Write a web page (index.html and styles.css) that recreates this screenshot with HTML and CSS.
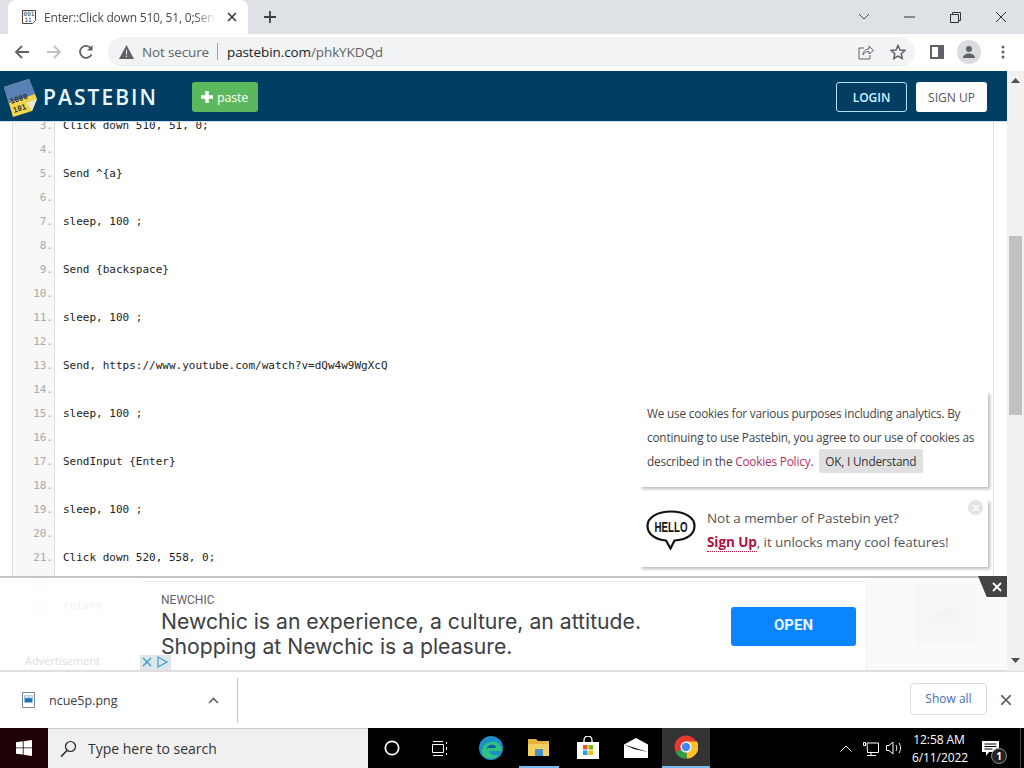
FILE: index.html
```html
<!DOCTYPE html>
<html lang="en">
<head>
<meta charset="utf-8">
<title>Enter::Click down 510, 51, 0;Send</title>
<link rel="stylesheet" href="styles.css">
</head>
<body>
<div class="tabbar">
  <div class="tab">
    <svg class="favicon" width="16" height="16" viewBox="0 0 16 16"><path d="M1.500 1.500h13v10l-3 3h-10z" fill="#fff" stroke="#444"/><text x="8" y="7" class="favtext">001</text><text x="7" y="13" class="favtext">11</text></svg>
    <span class="tab-title">Enter::Click down 510, 51, 0;Send</span>
    <svg class="tab-x" width="10" height="10" viewBox="0 0 10 10"><path d="M1 1l8 8M9 1l-8 8" stroke="#3c4043" stroke-width="1.700"/></svg>
  </div>
  <svg class="new-tab" width="14" height="14" viewBox="0 0 14 14"><path d="M7 1v12M1 7h12" stroke="#3c4043" stroke-width="1.800"/></svg>
  <div class="win-controls">
    <svg width="12" height="8" viewBox="0 0 12 8"><path d="M1 1l5 5 5-5" fill="none" stroke="#444" stroke-width="1"/></svg>
    <svg class="win-min" width="11" height="2" viewBox="0 0 11 2"><path d="M0 1h11" stroke="#333"/></svg>
    <svg class="win-max" width="11" height="11" viewBox="0 0 11 11"><path d="M.5 2.500h8v8h-8zM2.500 2.500v-2h8v8h-2" fill="none" stroke="#333"/></svg>
    <svg class="win-close" width="12" height="12" viewBox="0 0 12 12"><path d="M1 1l10 10M11 1L1 11" stroke="#333"/></svg>
  </div>
</div>
<div class="toolbar">
  <svg class="nav" width="16" height="16" viewBox="0 0 16 16"><path d="M15 8H2M8 2L2 8l6 6" fill="none" stroke="#5f6368" stroke-width="1.800"/></svg>
  <svg class="nav" width="16" height="16" viewBox="0 0 16 16"><path d="M1 8h13M8 2l6 6-6 6" fill="none" stroke="#bdc1c6" stroke-width="1.800"/></svg>
  <svg class="nav" width="16" height="16" viewBox="0 0 16 16"><path d="M13.500 10.500A6 6 0 1 1 13 4.500" fill="none" stroke="#5f6368" stroke-width="1.800"/><path d="M14.500 1v5.500H9z" fill="#5f6368"/></svg>
  <div class="omnibox">
    <svg width="15" height="14" viewBox="0 0 15 14"><path d="M7.500 0L15 14H0z" fill="#5f6368"/><path d="M7 5h1v4.500H7zM7 10.500h1v1.500H7z" fill="#f1f3f4"/></svg>
    <span class="not-secure">Not secure</span>
    <span class="omni-sep"></span>
    <span class="url">pastebin.com<span class="url-path">/phkYKDQd</span></span>
    <svg class="omni-share" width="16" height="16" viewBox="0 0 16 16"><path d="M6 4H1v11h11v-4M5 11c0-4 3-6 6-6V2l4.500 4.500L11 10V7.500c-3 0-5 1-6 3.500z" fill="none" stroke="#5f6368"/></svg>
    <svg width="16" height="16" viewBox="0 0 16 16"><path d="M8 1.500l2 4.500 4.800.5-3.600 3.200 1 4.800L8 12l-4.200 2.500 1-4.800L1.200 6.500 6 6z" fill="none" stroke="#5f6368" stroke-width="1.500"/></svg>
  </div>
  <svg class="tool-side" width="14" height="14" viewBox="0 0 14 14"><path d="M0 0h14v14H0z" fill="#5f6368"/><path d="M2 2h6v10H2z" fill="#fff"/></svg>
  <div class="avatar"><svg width="14" height="14" viewBox="0 0 14 14"><circle cx="7" cy="4" r="3" fill="#5f6368"/><path d="M1 13c0-3 3-4.500 6-4.500s6 1.500 6 4.500z" fill="#5f6368"/></svg></div>
  <svg class="tool-menu" width="4" height="14" viewBox="0 0 4 14"><circle cx="2" cy="2" r="1.500" fill="#5f6368"/><circle cx="2" cy="7" r="1.500" fill="#5f6368"/><circle cx="2" cy="12" r="1.500" fill="#5f6368"/></svg>
</div>
<div class="viewport">
  <div class="page">
    <header class="site-header">
      <svg class="logo" width="36" height="42" viewBox="0 0 36 42">
        <path d="M2 10L27 2l8 20-5 12-19 6z" fill="#f3d64e"/>
        <path d="M2 10L27 2l6 15-26 9z" fill="#5a80b8"/>
        <path d="M30 34l5-12-10 4z" fill="#e8e8d8"/>
        <text x="9" y="27" class="logo-text" transform="rotate(-18 9 27)">1000</text>
        <text x="12" y="36" class="logo-text" transform="rotate(-18 12 36)">101</text>
      </svg>
      <span class="brand">PASTEBIN</span>
      <a class="paste-btn"><svg width="14" height="14" viewBox="0 0 14 14"><path d="M7 1v12M1 7h12" stroke="#fff" stroke-width="3.500"/></svg>paste</a>
      <a class="btn btn-login">LOGIN</a>
      <a class="btn btn-signup">SIGN UP</a>
    </header>
    <div class="code">
      <div class="row"><i>3.</i><code>Click down 510, 51, 0;</code></div>
      <div class="row"><i>4.</i><code></code></div>
      <div class="row"><i>5.</i><code>Send ^{a}</code></div>
      <div class="row"><i>6.</i><code></code></div>
      <div class="row"><i>7.</i><code>sleep, 100 ;</code></div>
      <div class="row"><i>8.</i><code></code></div>
      <div class="row"><i>9.</i><code>Send {backspace}</code></div>
      <div class="row"><i>10.</i><code></code></div>
      <div class="row"><i>11.</i><code>sleep, 100 ;</code></div>
      <div class="row"><i>12.</i><code></code></div>
      <div class="row"><i>13.</i><code>Send, https://www.youtube.com/watch?v=dQw4w9WgXcQ</code></div>
      <div class="row"><i>14.</i><code></code></div>
      <div class="row"><i>15.</i><code>sleep, 100 ;</code></div>
      <div class="row"><i>16.</i><code></code></div>
      <div class="row"><i>17.</i><code>SendInput {Enter}</code></div>
      <div class="row"><i>18.</i><code></code></div>
      <div class="row"><i>19.</i><code>sleep, 100 ;</code></div>
      <div class="row"><i>20.</i><code></code></div>
      <div class="row"><i>21.</i><code>Click down 520, 558, 0;</code></div>
      <div class="row"><i>22.</i><code></code></div>
      <div class="row"><i>23.</i><code>return</code></div>
    </div>
    <div class="cookie-box">We use cookies for various purposes including analytics. By continuing to use Pastebin, you agree to our use of cookies as described in the <a class="cookie-link">Cookies Policy</a>. <span class="cookie-ok">OK, I Understand</span></div>
    <div class="hello-box">
      <svg class="hello-icon" width="50" height="40" viewBox="0 0 50 40"><path d="M25 1.500C12 1.500 1.500 7 1.500 16S11 30 20 30.500l4.500 8 4-8C40 30 48.500 25 48.500 16S38 1.500 25 1.500z" fill="#fff" stroke="#111" stroke-width="2.200"/><text x="25" y="22" class="hello-text" textLength="33" lengthAdjust="spacingAndGlyphs">HELLO</text></svg>
      <div class="hello-copy">
        <div>Not a member of Pastebin yet?</div>
        <div><a class="signup-link">Sign Up</a>, it unlocks many cool features!</div>
      </div>
      <span class="hello-close"><svg width="8" height="8" viewBox="0 0 8 8"><path d="M1 1l6 6M7 1L1 7" stroke="#fff" stroke-width="1.500"/></svg></span>
    </div>
    <div class="ad-dock">
      <div class="ad-side">
        <span class="ad-label">Advertisement</span>
        <span class="ad-choices"><svg width="14" height="14" viewBox="0 0 14 14"><path d="M3 3l8 8M11 3l-8 8" stroke="#3aa0c8" stroke-width="1.500"/></svg><svg width="14" height="14" viewBox="0 0 14 14"><path d="M3 2l9 5-9 5z" fill="none" stroke="#3aa0c8" stroke-width="1.200"/></svg></span>
      </div>
      <div class="ad">
        <div class="ad-copy">
          <div class="ad-brand">NEWCHIC</div>
          <div class="ad-head">Newchic is an experience, a culture, an attitude.<br>Shopping at Newchic is a pleasure.</div>
        </div>
        <a class="ad-open">OPEN</a>
      </div>
      <div class="ad-right"><span class="to-top"><svg width="30" height="18" viewBox="0 0 30 18"><path d="M4 15L15 5l11 10" fill="none" stroke="#f3f3f3" stroke-width="5"/></svg></span></div>
      <span class="ad-close"><svg width="10" height="10" viewBox="0 0 10 10"><path d="M1 1l8 8M9 1L1 9" stroke="#fff" stroke-width="1.800"/></svg></span>
    </div>
  </div>
  <div class="scrollbar">
    <svg width="9" height="5" viewBox="0 0 9 5"><path d="M4.500 0L9 5H0z" fill="#505050"/></svg>
    <div class="thumb"></div>
    <svg width="9" height="5" viewBox="0 0 9 5"><path d="M0 0h9L4.500 5z" fill="#505050"/></svg>
  </div>
</div>
<div class="downloads">
  <svg class="file-icon" width="13" height="16" viewBox="0 0 13 16"><path d="M.5.500h12v15H.5z" fill="#fff" stroke="#789"/><path d="M2.500 3.500h8v7h-8z" fill="#1b75bb"/><path d="M2.500 3.500h8v2l-2 1-2-1-2 1-2-1z" fill="#cfe6f5"/></svg>
  <span class="file-name">ncue5p.png</span>
  <svg class="file-caret" width="11" height="7" viewBox="0 0 11 7"><path d="M1 6l4.500-4.500L10 6" fill="none" stroke="#5f6368" stroke-width="1.600"/></svg>
  <span class="dl-sep"></span>
  <a class="show-all">Show all</a>
  <svg class="dl-close" width="10" height="10" viewBox="0 0 10 10"><path d="M0 0l10 10M10 0L0 10" stroke="#5f6368" stroke-width="1.700"/></svg>
</div>
<div class="taskbar">
  <div class="start"><svg width="16" height="16" viewBox="0 0 16 16"><path d="M0 2.300l6.800-1v6.200H0zM7.600 1.200L16 0v7.500H7.600zM0 8.300h6.800v6.300L0 13.700zM7.600 8.300H16V16l-8.400-1.200z" fill="#fff"/></svg></div>
  <div class="search"><svg width="17" height="17" viewBox="0 0 17 17"><circle cx="10.500" cy="6.500" r="5" fill="none" stroke="#222" stroke-width="1.200"/><path d="M7 10.500L1 16.500" stroke="#222" stroke-width="1.500"/></svg><span>Type here to search</span></div>
  <div class="task-icons">
    <span class="ti"><svg width="16" height="16" viewBox="0 0 16 16"><circle cx="8" cy="8" r="6.700" fill="none" stroke="#fff" stroke-width="1.700"/></svg></span>
    <span class="ti"><svg width="17" height="15" viewBox="0 0 17 15"><path d="M.5 3.500h11v8H.5zM1 .5h10M1 14.500h10M14.500 1v2M14.500 6v3M14.500 12v2" fill="none" stroke="#fff"/></svg></span>
    <span class="ti ti-edge"><svg width="24" height="24" viewBox="0 0 24 24"><circle cx="12" cy="12" r="12" fill="#1b8fc9"/><path d="M3 16C3 7 12 4 17 6c4 2 6 6 6 9H10c1 4 6 5 10 4-5 6-17 4-17-3z" fill="#2ec27e"/><path d="M7 14c1-5 5-6 8-5 2 1 2 3 2 3H7z" fill="#0b5fa8"/></svg></span>
    <span class="ti ti-open"><svg width="22" height="20" viewBox="0 0 22 20"><path d="M0 1h8l2 2h11v15H0z" fill="#e6b33e"/><path d="M0 6h21v12H0z" fill="#f5cf5f"/><path d="M7 11h8v7H7z" fill="#4a90c8"/></svg></span>
    <span class="ti ti-store"><svg width="24" height="24" viewBox="0 0 24 24"><path d="M8 6V4a4 4 0 0 1 8 0v2" fill="none" stroke="#fff" stroke-width="1.300"/><path d="M1 6h22v17H1z" fill="#fff"/><path d="M7 9h4.500v4.500H7z" fill="#e8532b"/><path d="M12.500 9H17v4.500h-4.500z" fill="#7fba00"/><path d="M7 14.500h4.500V19H7z" fill="#17a2e0"/><path d="M12.500 14.500H17V19h-4.500z" fill="#fcb900"/></svg></span>
    <span class="ti"><svg width="24" height="20" viewBox="0 0 24 20"><path d="M12 0l12 6.500V20H0V6.500z" fill="#fff"/><path d="M0 6.500L24 14 10 11z" fill="#000"/><path d="M12 13l12 6v1H10z" fill="#fff"/></svg></span>
    <span class="ti ti-active"><svg width="24" height="24" viewBox="0 0 24 24"><circle cx="12" cy="12" r="11.500" fill="#e33b2e"/><path d="M12 12L1.500 17A11.500 11.500 0 0 0 13 23.500z" fill="#2e9e49"/><path d="M12 6.500h11A11.500 11.500 0 0 1 13 23.500z" fill="#fbc02d"/><circle cx="12" cy="12" r="5.500" fill="#fff"/><circle cx="12" cy="12" r="4.200" fill="#4285f4"/></svg></span>
  </div>
  <div class="tray">
    <svg class="tray-caret" width="12" height="7" viewBox="0 0 12 7"><path d="M.5 6.500L6 1l5.500 5.500" fill="none" stroke="#fff"/></svg>
    <svg width="16" height="15" viewBox="0 0 16 15"><path d="M.5 1.500h2v3h-2zM4 2h11.500v9.500h-11zM8 11.500v3M4 14.500h9" fill="none" stroke="#fff"/></svg>
    <svg width="17" height="14" viewBox="0 0 17 14"><path d="M.5 4.500H3L7 1v12L3 9.500H.5zM10 4c1 2 1 4 0 6M13 2c2 3 2 7 0 10" fill="none" stroke="#fff"/></svg>
    <div class="clock"><div>12:58 AM</div><div>6/11/2022</div></div>
    <div class="notif"><svg width="17" height="15" viewBox="0 0 17 15"><path d="M0 0h17v11H7l-3 4v-4H0z" fill="#fff"/><path d="M2.500 3h12M2.500 5.500h12M2.500 8h8" stroke="#000"/></svg><span class="notif-count">1</span></div>
    <span class="desk-edge"></span>
  </div>
</div>
</body>
</html>
```
FILE: styles.css
```css
* { box-sizing: border-box; }
html, body { margin: 0; height: 768px; width: 1024px; overflow: hidden; }
body { display: flex; flex-direction: column; font-family: "Open Sans", "Noto Sans", sans-serif; background: #fff; color: #333; }
a { text-decoration: none; }
svg { display: block; flex: none; }

.tabbar { height: 34px; flex: none; background: #dee1e6; display: flex; align-items: center; padding-left: 8px; }
.tab { width: 240px; height: 34px; background: #fff; border-radius: 8px 8px 0 0; display: flex; align-items: center; padding: 0 11px 0 13px; align-self: flex-end; }
.favicon { margin-right: 7px; }
.favtext { font: 6px "DejaVu Sans Mono", monospace; text-anchor: middle; fill: #333; }
.tab-title { font-size: 12px; color: #45494d; white-space: nowrap; overflow: hidden; width: 172px; letter-spacing: -.2px; -webkit-mask-image: linear-gradient(90deg, #000 88%, transparent); mask-image: linear-gradient(90deg, #000 88%, transparent); }
.tab-x { margin-left: auto; }
.new-tab { margin-left: 15px; }
.win-controls { margin-left: auto; display: flex; align-items: center; height: 28px; }
.win-controls svg:first-child { margin-right: 34px; }
.win-min { margin-right: 35px; }
.win-max { margin-right: 34px; }
.win-close { margin-right: 17px; }

.toolbar { height: 37px; flex: none; background: #fff; display: flex; align-items: center; padding: 0 0 2px 14px; }
.nav { margin-right: 16px; }
.nav:nth-child(3) { margin-right: 14px; }
.omnibox { width: 807px; height: 30px; background: #f1f3f4; border-radius: 15px; display: flex; align-items: center; padding: 0 9px 0 11px; margin-left: 0; }
.not-secure { font-size: 13.500px; color: #5f6368; margin-left: 8px; letter-spacing: -.15px; }
.omni-sep { width: 1px; height: 17px; background: #9aa0a6; margin: 0 9px 0 8px; }
.url { font-size: 13.500px; color: #202124; letter-spacing: -.1px; }
.url-path { color: #5f6368; }
.omni-share { margin-left: auto; margin-right: 16px; }
.tool-side { margin-left: 15px; }
.avatar { width: 24px; height: 24px; border-radius: 50%; background: #dadce0; display: flex; align-items: center; justify-content: center; margin-left: 13px; }
.tool-menu { margin-left: 20px; }

.viewport { height: 600px; flex: none; display: flex; }
.page { width: 1007px; position: relative; overflow: hidden; background: #fff; }
.scrollbar { width: 17px; background: #f1f1f1; display: flex; flex-direction: column; align-items: center; padding: 7px 0 8px; }
.thumb { width: 13px; height: 179px; background: #c1c1c1; margin-top: 153px; margin-bottom: auto; }

.site-header { height: 51px; background: #003f63; display: flex; align-items: center; position: relative; z-index: 2; padding: 2px 0 0 2px; border-bottom: 1px solid #c7e3f2; }
.logo { margin-top: 1px; }
.logo-text { font: 700 7.500px "DejaVu Sans Mono", monospace; fill: #333; }
.brand { color: #e9f7ff; font: 600 21px "Open Sans", sans-serif; letter-spacing: 2.050px; margin-left: 5px; width: 149px; white-space: nowrap; }
.paste-btn { width: 66px; height: 30px; background: #5cb85c; border-radius: 3px; color: #fff; display: flex; align-items: center; font-size: 12.500px; padding-left: 8px; gap: 3px; letter-spacing: -.2px; }
.btn { width: 71px; height: 30px; border-radius: 3px; display: flex; align-items: center; justify-content: center; font-size: 12px; }
.btn-login { margin-left: auto; border: 1px solid #b5e2f2; color: #d5f1ff; font-weight: 600; }
.btn-signup { background: #fff; color: #555; margin: 0 20px 0 9px; }

.code { margin: -8px 13px 0 12px; border: 1px solid #dfdfdf; border-width: 0 1px; position: relative; }
.row { height: 24px; display: flex; font: 11px/24px "DejaVu Sans Mono", monospace; color: #222; }
.row i { width: 42px; background: #f8f8f8; border-right: 1px solid #ddd; text-align: right; padding-right: 1px; font-style: normal; color: #a9a9a9; flex: none; }
.row code { font: inherit; padding-left: 8px; white-space: pre; }

.cookie-box { position: absolute; left: 640px; top: 321px; width: 348px; height: 95px; background: #fff; padding: 9px 8px 0 7px; font: 11.800px/24px "Open Sans", sans-serif; color: #444; box-shadow: 2px 2px 3px #bbb; z-index: 1; letter-spacing: -.19px; }
.cookie-link { color: #b03060; }
.cookie-ok { display: inline-block; background: #e0e0e0; border-radius: 2px; padding: 0 7px 0 6px; color: #333; margin-left: 3px; height: 24px; }
.hello-box { position: absolute; left: 640px; top: 429px; width: 348px; height: 67px; background: #fff; box-shadow: 2px 2px 3px #bbb; display: flex; align-items: center; padding: 0 0 8px 6px; z-index: 1; }
.hello-text { font: 700 15px "Liberation Sans Narrow", "Liberation Sans", sans-serif; text-anchor: middle; fill: #111; }
.hello-copy { margin-left: 11px; font-size: 13.500px; line-height: 24px; color: #555; white-space: nowrap; letter-spacing: -.08px; }
.signup-link { color: #b01040; font-weight: 700; border-bottom: 1px dotted #b01040; }
.hello-close { position: absolute; left: 328px; top: 0; width: 15px; height: 15px; border-radius: 50%; background: #e4e4e4; display: flex; align-items: center; justify-content: center; }

.ad-dock { position: absolute; left: 0; right: 0; bottom: 0; height: 95px; display: flex; background: rgba(255,255,255,.93); border-top: 2px solid #c4c4c4; border-bottom: 1px solid #ddd; z-index: 3; }
.ad-side { width: 140px; flex: none; position: relative; }
.ad-label { position: absolute; left: 25px; bottom: 2px; font-size: 11px; color: #ddd; }
.ad-choices { position: absolute; right: -31px; bottom: 0; width: 31px; height: 15px; display: flex; background: #dfe6ea; z-index: 1; gap: 1px; }
.ad { width: 727px; flex: none; background: #fff; display: flex; align-items: flex-start; padding: 10px 10px 0 21px; position: relative; margin-top: 3px; border: 1px solid #f2f2f2; border-width: 1px 1px 0 0; }
.ad-copy { flex: 1; }
.ad-brand { font: 12px/16px Roboto, sans-serif; color: #5f6368; }
.ad-head { font: 400 21.200px/25px Inter, Roboto, sans-serif; color: #3c4043; white-space: nowrap; margin-top: 1px; }
.ad-open { width: 125px; height: 39px; margin-top: 15px; background: #0a84ff; border-radius: 3px; color: #e7f3ff; font: 700 15px/37px Roboto, sans-serif; text-align: center; }
.ad-right { flex: 1; background: #fafafa; position: relative; }
.to-top { position: absolute; left: 49px; top: 6px; width: 60px; height: 60px; background: #f6f6f6; display: flex; align-items: center; justify-content: center; }
.ad-close { position: absolute; right: 0; top: -2px; width: 29px; height: 21px; background: #444; clip-path: polygon(0 0, 100% 0, 100% 100%, 30% 100%); display: flex; align-items: center; justify-content: center; padding-left: 9px; }

.downloads { height: 57px; flex: none; background: #fff; border-top: 1px solid #e0e0e0; display: flex; align-items: center; padding-left: 22px; }
.file-name { font-size: 12.500px; color: #3c4043; margin-left: 14px; width: 159px; }
.dl-sep { width: 1px; height: 45px; background: #c8c8c8; margin-left: 18px; }
.show-all { margin-left: auto; width: 77px; height: 32px; margin-top: -3px; border: 1px solid #dadce0; border-radius: 4px; color: #4a6fb0; font-size: 12px; display: flex; align-items: center; justify-content: center; }
.dl-close { margin: 0 13px 0 14px; }

.taskbar { height: 40px; flex: none; background: #000; display: flex; align-items: center; color: #fff; }
.start { width: 48px; height: 40px; background: #1f0308; display: flex; align-items: center; justify-content: center; }
.search { width: 320px; height: 40px; background: #f0f0f0; color: #333; display: flex; align-items: center; padding-left: 12px; font-size: 14px; gap: 11px; border-top: 1px solid #ccc; }
.task-icons { display: flex; }
.ti { width: 48px; height: 40px; display: flex; align-items: center; justify-content: center; }
.ti-edge { margin-left: 3px; }
.ti-store { margin-left: 1px; }
.ti-open { background: linear-gradient(#76b9ed, #76b9ed) center bottom / 40px 2px no-repeat; }
.ti-active { background: #333; border-bottom: 2px solid #76b9ed; margin-left: 2px; }
.tray { margin-left: auto; display: flex; align-items: center; gap: 7px; height: 40px; margin-right: 3px; }
.tray-caret { margin-right: 4px; }
.clock { font-size: 12px; line-height: 18px; text-align: center; width: 54px; margin-left: 2px; white-space: nowrap; padding-top: 2px; letter-spacing: -.1px; }
.notif { width: 36px; position: relative; display: flex; justify-content: center; padding-right: 2px; }
.notif-count { position: absolute; right: 2px; top: 7px; width: 16px; height: 16px; border: 1px solid #888; border-radius: 50%; font: 700 10px/14px "Open Sans", sans-serif; text-align: center; background: #222; }
.desk-edge { width: 1px; height: 40px; background: #444; margin-left: 4px; }
```
